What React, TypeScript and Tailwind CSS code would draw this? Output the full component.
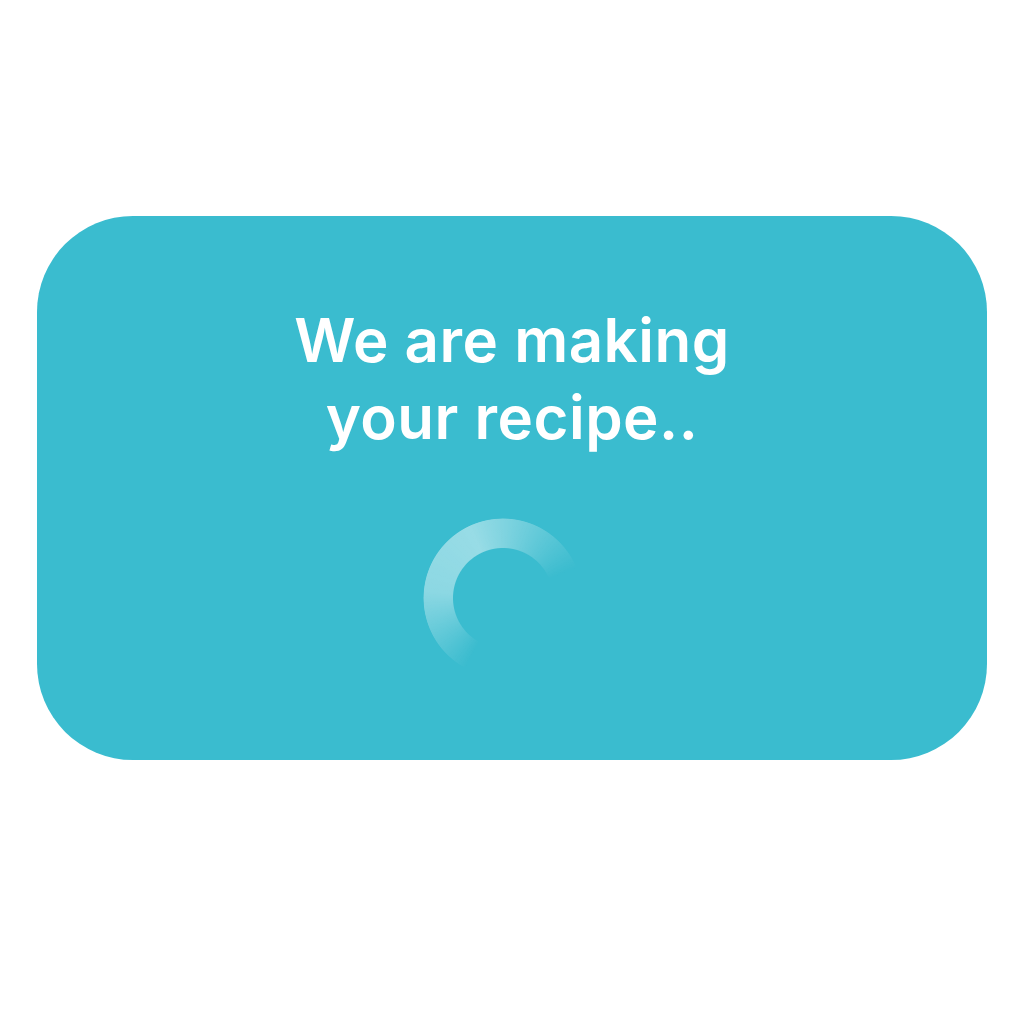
export default function App() {
  return (
    <div className="w-[1024px] h-[1024px] bg-white flex flex-col">
      <div className="h-[216px]" />
      <div className="ml-[37px] w-[950px] h-[544px] rounded-[96px] bg-[#3abccf] flex flex-col items-center">
        <h1
          className="mt-[86px] text-center text-white font-semibold text-[60px] leading-[77px] tracking-[0.5px]"
          style={{ fontFamily: "Inter, 'Open Sans', sans-serif" }}
        >
          We are making
          <br />
          your recipe..
        </h1>
        {/* spinner ring */}
        <div className="mt-[62px] ml-[-18px] w-[160px] h-[160px] rounded-full bg-[conic-gradient(rgba(255,255,255,0.36)_0deg,rgba(255,255,255,0)_68deg,rgba(255,255,255,0)_208deg,rgba(255,255,255,0.42)_275deg,rgba(255,255,255,0.48)_335deg,rgba(255,255,255,0.36)_360deg)] [mask-image:radial-gradient(circle,transparent_49.5px,black_50.5px,black_79px,transparent_80px)]" />
      </div>
    </div>
  );
}
